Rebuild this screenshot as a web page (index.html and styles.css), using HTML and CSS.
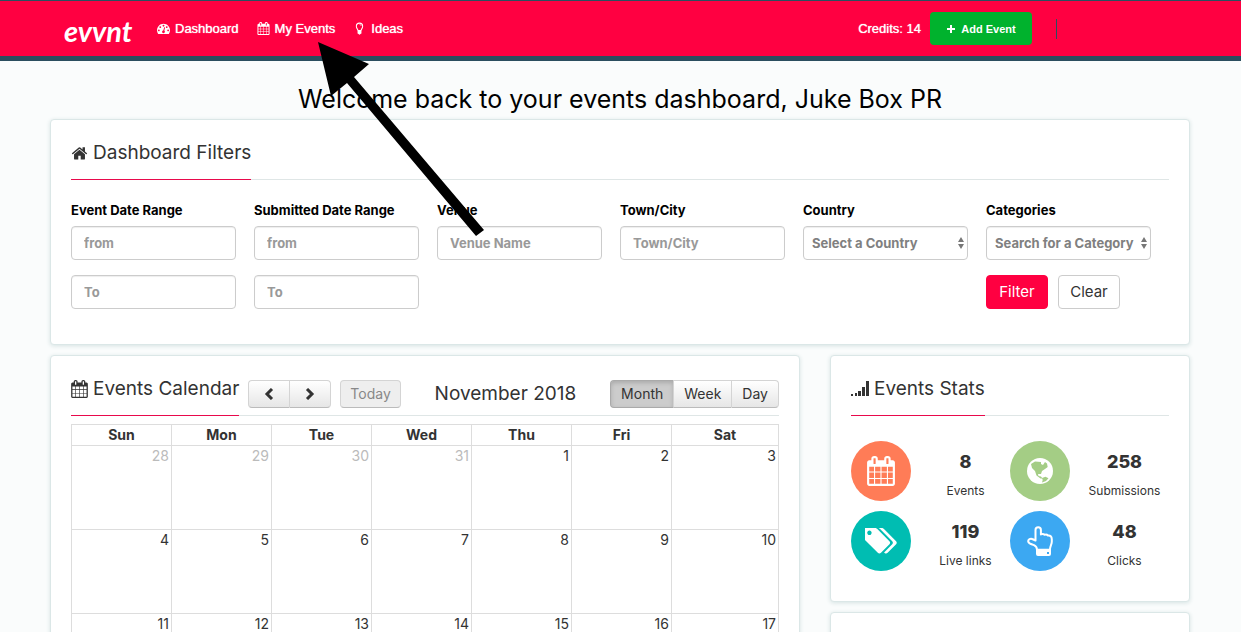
FILE: index.html
```html
<!DOCTYPE html>
<html lang="en">
<head>
<meta charset="utf-8">
<title>evvnt dashboard</title>
<link rel="stylesheet" href="styles.css">
</head>
<body>
<svg class="sprite" aria-hidden="true">
  <symbol id="calendar" viewBox="64 0 1664 1792"><path d="M192 1664h288v-288h-288v288zm352 0h320v-288h-320v288zm-352-352h288v-320h-288v320zm352 0h320v-320h-320v320zm-352-384h288v-288h-288v288zm736 736h320v-288h-320v288zm-384-736h320v-288h-320v288zm768 736h288v-288h-288v288zm-384-352h320v-320h-320v320zm-352-864v-288q0-13-9.500-22.500t-22.500-9.500h-64q-13 0-22.500 9.500t-9.500 22.500v288q0 13 9.500 22.500t22.500 9.500h64q13 0 22.500-9.500t9.500-22.500zm736 864h288v-320h-288v320zm-384-384h320v-288h-320v288zm384 0h288v-288h-288v288zm32-480v-288q0-13-9.500-22.500t-22.500-9.500h-64q-13 0-22.500 9.500t-9.500 22.500v288q0 13 9.500 22.500t22.500 9.500h64q13 0 22.500-9.500t9.500-22.500zm384-64v1280q0 52-38 90t-90 38h-1408q-52 0-90-38t-38-90v-1280q0-52 38-90t90-38h128v-96q0-66 47-113t113-47h64q66 0 113 47t47 113v96h384v-96q0-66 47-113t113-47h64q66 0 113 47t47 113v96h128q52 0 90 38t38 90z"/></symbol>
</svg>
<div class="page">
  <header class="topbar">
    <a class="logo" href="#">evvnt</a>
    <nav class="nav">
      <a href="#"><svg class="icon-sm" viewBox="0 0 1792 1792"><path d="M384 1152q0-53-37.500-90.500t-90.500-37.500-90.500 37.500-37.500 90.500 37.500 90.500 90.500 37.500 90.500-37.500 37.500-90.500zm192-448q0-53-37.500-90.500t-90.500-37.500-90.500 37.500-37.500 90.500 37.500 90.500 90.500 37.500 90.500-37.500 37.500-90.500zm428 481l101-382q6-26-7.500-48.500t-38.500-29.500-48 6.500-30 39.500l-101 382q-60 5-107 43.500t-63 98.500q-20 77 20 146t117 89 146-20 89-117q16-60-6-117t-72-91zm660-33q0-53-37.500-90.500t-90.500-37.500-90.500 37.500-37.500 90.500 37.500 90.500 90.500 37.500 90.500-37.500 37.500-90.500zm-640-640q0-53-37.500-90.500t-90.500-37.500-90.500 37.500-37.500 90.500 37.500 90.500 90.500 37.500 90.500-37.500 37.500-90.500zm448 192q0-53-37.500-90.500t-90.500-37.500-90.500 37.500-37.500 90.500 37.500 90.500 90.500 37.500 90.500-37.500 37.500-90.500zm320 448q0 261-141 483-19 29-54 29h-1402q-35 0-54-29-141-221-141-483 0-182 71-348t191-286 286-191 348-71 348 71 286 191 191 286 71 348z"/></svg>Dashboard</a>
      <a href="#"><svg class="icon-sm"><use href="#calendar"/></svg>My Events</a>
      <a href="#"><svg class="icon-sm" viewBox="0 0 14 14"><path d="M5.300 9.200C5.200 7.600 3.600 6.900 3.600 4.600a3.400 3.400 0 0 1 6.800 0c0 2.300-1.600 3-1.700 4.600z" fill="none" stroke="currentColor" stroke-width="1.100"/><path d="M7 2.600q1.700 0 1.900 1.700" fill="none" stroke="currentColor" stroke-width=".7"/><path d="M4.900 9.600h4.200v2.800l-1.100.5q-1 1.400-2 0l-1.100-.5z"/></svg>Ideas</a>
    </nav>
    <span class="credits">Credits: 14</span>
    <button class="add" type="button"><svg class="plus" viewBox="0 0 10 10"><path d="M4 1h2v3h3v2H6v3H4V6H1V4h3z"/></svg>Add Event</button>
    <span class="divider"></span>
  </header>

  <main class="content">
    <h1 class="welcome">Welcome back to your events dashboard, Juke Box PR</h1>

    <section class="card filters">
      <div class="card-head"><h2 class="title"><svg class="icon-home" viewBox="0 128 1792 1472"><path d="M1472 992v480q0 26-19 45t-45 19h-384v-384h-256v384h-384q-26 0-45-19t-19-45v-480q0-1 .5-3t.5-3l575-474 575 474q1 2 1 6zm223-69l-62 74q-8 9-21 11h-3q-13 0-21-7l-692-577-692 577q-12 8-24 7-13-2-21-11l-62-74q-8-10-7-23.500t11-21.500l719-599q32-26 76-26t76 26l244 204v-195q0-14 9-23t23-9h192q14 0 23 9t9 23v408l219 182q10 8 11 21.500t-7 23.500z"/></svg>Dashboard Filters</h2></div>
      <form class="fields">
        <div class="field"><label for="ef">Event Date Range</label><input id="ef" type="text" placeholder="from"><input type="text" placeholder="To" aria-label="Event date to"></div>
        <div class="field"><label for="sf">Submitted Date Range</label><input id="sf" type="text" placeholder="from"><input type="text" placeholder="To" aria-label="Submitted date to"></div>
        <div class="field"><label for="ve">Venue</label><input id="ve" type="text" placeholder="Venue Name"></div>
        <div class="field"><label for="to">Town/City</label><input id="to" type="text" placeholder="Town/City"></div>
        <div class="field"><label for="co">Country</label><div class="select"><select id="co"><option>Select a Country</option></select><svg viewBox="0 0 6 12"><path d="M3 0l3 5H0zM3 12l3-5H0z"/></svg></div></div>
        <div class="field"><label for="ca">Categories</label><div class="select"><select id="ca"><option>Search for a Category</option></select><svg viewBox="0 0 6 12"><path d="M3 0l3 5H0zM3 12l3-5H0z"/></svg></div>
          <div class="actions"><button class="btn primary" type="submit">Filter</button><button class="btn" type="reset">Clear</button></div></div>
      </form>
    </section>

    <div class="columns">
      <section class="card">
        <div class="card-head cal-head">
          <h2 class="title"><svg class="icon-cal"><use href="#calendar"/></svg>Events Calendar</h2>
          <div class="toolbar">
            <div class="group"><button type="button" aria-label="Previous"><svg class="chev" viewBox="0 0 10 12"><path d="M8 1L3 6l5 5"/></svg></button><button type="button" aria-label="Next"><svg class="chev" viewBox="0 0 10 12"><path d="M2 1l5 5-5 5"/></svg></button></div>
            <div class="group today"><button type="button" disabled>Today</button></div>
            <h3 class="month">November 2018</h3>
            <div class="group views"><button class="active" type="button">Month</button><button type="button">Week</button><button type="button">Day</button></div>
          </div>
        </div>
        <table class="calendar">
          <thead><tr><th>Sun</th><th>Mon</th><th>Tue</th><th>Wed</th><th>Thu</th><th>Fri</th><th>Sat</th></tr></thead>
          <tbody>
            <tr><td class="other">28</td><td class="other">29</td><td class="other">30</td><td class="other">31</td><td>1</td><td>2</td><td>3</td></tr>
            <tr><td>4</td><td>5</td><td>6</td><td>7</td><td>8</td><td>9</td><td>10</td></tr>
            <tr><td>11</td><td>12</td><td>13</td><td>14</td><td>15</td><td>16</td><td>17</td></tr>
          </tbody>
        </table>
      </section>

      <div class="side">
        <section class="card">
          <div class="card-head"><h2 class="title"><svg class="icon-sig" viewBox="0 0 18 16"><path d="M0 13h2v2H0zM4 12h2v3H4zM7 10h3v5H7zM11 6h3v9h-3zM15 0h3v15h-3z"/></svg>Events Stats</h2></div>
          <div class="stats">
            <span class="disc orange"><svg class="big-cal"><use href="#calendar"/></svg></span>
            <p class="stat"><strong>8</strong>Events</p>
            <span class="disc green"><svg class="globe" viewBox="0 0 26 26"><circle cx="13" cy="13" r="13"/><path fill="#a4cd85" d="M4 6l4-2.500 6 .5v2l2 1 2-3 2 1.500.7 3.500-2.700 2-3 2-1 3h-3l.5 2 2.500.5 1.500 2h-2l-4-3-1.500-4.500-3-3zM15 20l3.500-1.300 3 1.500-2.500 2.800-4 1.500.7-2.500z"/></svg></span>
            <p class="stat"><strong>258</strong>Submissions</p>
            <span class="disc teal"><svg class="tags" viewBox="0 190 1850 1460"><path d="M384 448q0-53-37.500-90.500t-90.500-37.500-90.500 37.500-37.500 90.500 37.500 90.500 90.500 37.500 90.500-37.500 37.500-90.500zm1067 576q0 53-37 90l-491 492q-39 37-91 37-53 0-90-37l-715-716q-38-37-64.500-101t-26.500-117v-416q0-52 38-90t90-38h416q53 0 117 26.500t102 64.500l715 714q37 39 37 91zm384 0q0 53-37 90l-491 492q-39 37-91 37-36 0-59-14t-53-45l470-470q37-37 37-90 0-52-37-91l-715-714q-38-38-102-64.500t-117-26.500h224q53 0 117 26.500t102 64.500l715 714q37 39 37 91z"/></svg></span>
            <p class="stat"><strong>119</strong>Live links</p>
            <span class="disc blue"><svg class="hand" viewBox="0 0 26 30"><path d="M8.500 14.500V4a2.700 2.700 0 0 1 5.400 0v4.500q2-1.200 3.700.3 2-.9 3.300.7 3.800-.5 3.900 3.700v2.500c0 2.500-1.700 4.500-1.900 8H10c0-2.500-1.300-3.600-3-4.500-1.700-.9-5.500-1.200-5.800-3.800-.2-2 2.300-3.300 4-2.400z" fill="none" stroke="#fff" stroke-width="2" stroke-linejoin="round"/><path fill-rule="evenodd" d="M9 23h15v5q0 2-2 2H11q-2 0-2-2zM20 26v2h2v-2z"/></svg></span>
            <p class="stat"><strong>48</strong>Clicks</p>
          </div>
        </section>
        <section class="card next"></section>
      </div>
    </div>
  </main>
  <svg class="arrow" viewBox="0 0 170 198"><path d="M2 2l51 22-15 13 130 153-8 6L31 43 15 56z"/></svg>
</div>
</body>
</html>
```
FILE: styles.css
```css
* { box-sizing: border-box; }
body {
  margin: 0;
  background: #fafcfc;
  color: #333;
  font: 14px/20px Inter, sans-serif;
}
h1, h2, h3, p { margin: 0; font-weight: 400; }
button, input, select { font: inherit; color: inherit; }
svg { fill: currentColor; flex: none; }
.sprite { position: absolute; width: 0; height: 0; }
.page { position: relative; height: 100vh; overflow: hidden; }

.topbar {
  display: flex;
  align-items: center;
  height: 61px;
  padding: 0 184px 0 64px;
  background: #ff0041;
  border-top: 1px solid #2b4e5f;
  border-bottom: 5px solid #2b4e5f;
  color: #fff;
  font: 13px/20px "Liberation Sans", sans-serif;
  text-shadow: 0 0 1px #fff;
}
.topbar a { color: inherit; text-decoration: none; }
.logo { width: 93px; font: italic 700 29px/40px Lato, sans-serif; text-shadow: none; padding-top: 4px; }
.nav { display: flex; gap: 18px; flex: 1; }
.nav a { display: flex; align-items: center; gap: 5px; }
.icon-sm { width: 13px; height: 13px; }
.add {
  display: flex;
  align-items: center;
  justify-content: center;
  gap: 5px;
  width: 102px;
  height: 33px;
  margin: 0 24px 0 9px;
  border: 0;
  border-radius: 4px;
  background: #00b22d;
  font: 700 11px/16px "Liberation Sans", sans-serif;
  color: #fff;
}
.plus { width: 10px; height: 10px; }
.divider { width: 1px; height: 20px; background: #2b4e5f; }

.content { padding: 22px 51px 0 50px; }
.welcome { color: #000; font-size: 25px; line-height: 32px; text-align: center; margin-bottom: 4px; }
.card {
  background: #fff;
  border: 1px solid #dbe7e7;
  border-radius: 4px;
  box-shadow: 0 1px 4px #d5e3e3;
  padding: 0 20px;
}
.card-head { display: flex; border-bottom: 1px solid #dfe6e6; }
.title {
  display: flex;
  align-items: center;
  gap: 5px;
  height: 60px;
  margin-bottom: -1px;
  padding-top: 6px;
  border-bottom: 1px solid #e8094c;
  font-size: 19px;
  white-space: nowrap;
}
.icon-home { width: 17px; height: 14px; }
.icon-cal { width: 17px; height: 18px; }
.icon-sig { width: 18px; height: 16px; }

.filters { height: 226px; margin-bottom: 10px; }
.fields { display: grid; grid-template-columns: repeat(6, 1fr); padding-top: 20px; }
.field { padding-right: 18px; font-size: 13px; font-weight: 700; }
.field label { display: block; color: #000; margin-bottom: 6px; white-space: nowrap; }
.field input, .field select {
  display: block;
  width: 100%;
  height: 34px;
  margin-bottom: 15px;
  padding: 0 12px;
  border: 1px solid #ccc;
  border-radius: 4px;
  background: #fff;
  box-shadow: inset 0 1px 1px #eee;
}
.field input::placeholder { color: #999; opacity: 1; }
.field select { appearance: none; padding: 0 8px; color: #808080; }
.select { position: relative; }
.select svg { position: absolute; right: 4px; top: 11px; width: 6px; height: 12px; color: #777; }
.actions { display: flex; gap: 10px; }
.btn { width: 62px; height: 34px; padding: 0; border: 1px solid #ccc; border-radius: 4px; background: #fff; font-size: 15px; font-weight: 400; }
.btn.primary { background: #ff0041; border-color: #ff0041; color: #fff; }

.columns { display: grid; grid-template-columns: 750fr 360fr; gap: 30px; }
.cal-head { gap: 9px; }
.toolbar { display: flex; flex: 1; padding-top: 24px; }
.group { display: flex; height: 28px; }
.group button {
  padding: 0 9px;
  border: 1px solid #d4d4d4;
  border-bottom-color: #bbb;
  border-right-width: 0;
  background: linear-gradient(#fff, #e6e6e6);
  font-size: 14px;
}
.group button:first-child { border-radius: 4px 0 0 4px; }
.group button:last-child { border-radius: 0 4px 4px 0; border-right-width: 1px; }
.group button:only-child { border-radius: 4px; }
.group .active { background: #ccc; border-color: #aaa; box-shadow: inset 0 2px 4px #aaa; }
.group button:disabled { background: #eee; color: #888; }
.views button { padding: 0 10px; }
.chev { width: 10px; height: 12px; margin: 0 6px; fill: none; stroke: #333; stroke-width: 3; display: block; }
.today { margin-left: 9px; }
.month { flex: 1; text-align: center; font-size: 19px; line-height: 28px; white-space: nowrap; }
.calendar { width: 100%; margin-top: 8px; table-layout: fixed; border-collapse: collapse; }
.calendar th, .calendar td { border: 1px solid #ddd; width: 100px; }
.calendar th:last-child { width: auto; }
.calendar th { height: 21px; padding: 0; font-weight: 700; line-height: 20px; }
.calendar td { height: 84px; padding: 0 2px; text-align: right; vertical-align: top; }
.calendar .other { color: #bbb; }

.stats {
  display: grid;
  grid-template-columns: 60px 1fr 60px 1fr;
  row-gap: 10px;
  padding: 25px 0 30px;
}
.disc { display: flex; align-items: center; justify-content: center; height: 60px; border-radius: 50%; color: #fff; }
.orange { background: #ff7c57; }
.green { background: #a4cd85; }
.teal { background: #00bdb2; }
.blue { background: #3ca8f2; }
.big-cal { width: 28px; height: 30px; }
.globe { width: 26px; height: 26px; }
.tags { width: 32px; height: 26px; }
.hand { width: 26px; height: 30px; }
.stat { padding: 11px 0 0 10px; text-align: center; font-size: 12px; white-space: nowrap; }
.stat strong { display: block; margin-bottom: 9px; font-size: 18px; font-weight: 800; }
.next { height: 60px; margin-top: 10px; }
.arrow { position: absolute; left: 316px; top: 40px; width: 170px; height: 198px; color: #000; }
```
